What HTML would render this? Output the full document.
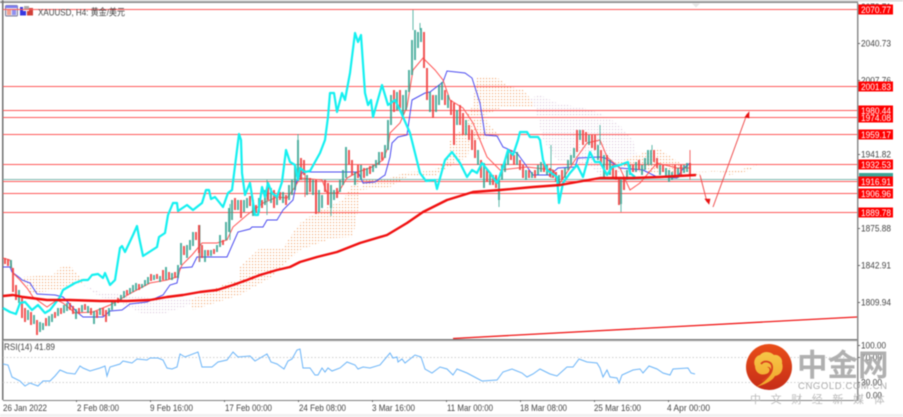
<!DOCTYPE html>
<html><head><meta charset="utf-8"><style>
html,body{margin:0;padding:0;background:#fff;width:903px;height:417px;overflow:hidden}
svg{display:block;position:absolute;left:0;top:0;filter:blur(.45px)}
text{font-family:"Liberation Sans","Noto Sans CJK SC",sans-serif}
</style></head><body>
<svg width="903" height="417" viewBox="0 0 903 417" xmlns="http://www.w3.org/2000/svg">
<defs>
<pattern id="o" width="3" height="3" patternUnits="userSpaceOnUse"><rect width="1.1" height="1.1" fill="#f2a46a"/></pattern>
<pattern id="p" width="3" height="3" patternUnits="userSpaceOnUse"><rect width="1.1" height="1.1" fill="#d9c6dc"/></pattern>
<linearGradient id="lg" x1="0" y1="0" x2="0" y2="1"><stop offset="0" stop-color="#e94e18"/><stop offset="1" stop-color="#c62d18"/></linearGradient>
<linearGradient id="ly" x1="0" y1="0" x2="0" y2="1"><stop offset="0" stop-color="#f6c648"/><stop offset="1" stop-color="#f2a52a"/></linearGradient>
</defs>
<rect width="903" height="417" fill="#fff"/>
<rect x="0" y="0" width="903" height="1.5" fill="#d8d8d8"/>
<rect x="0" y="1.5" width="858" height="1.5" fill="#8a8a8a"/>
<rect x="2" y="0" width="1.5" height="400" fill="#707070"/>
<rect x="0" y="414" width="903" height="3" fill="#f0f0f0"/>

<!-- clouds -->
<g>
<path fill="url(#o)" d="M22 277L53 275L62 266L70 265L80 277L84 282L60 290L30 293Z"/>
<path fill="url(#p)" d="M83 285L100 292L125 295L150 298L190 298L190 305L160 315L140 313L120 302L100 297Z"/>
<path fill="url(#o)" d="M190 300L227 283L240 280L240 267L260 248L283 248L290 237L300 223L315 213L343 200L355 180L358 167L360 200L353 237L333 238L300 250L270 278L240 295L193 310Z"/>
<path fill="url(#o)" d="M360 190L363 180L390 178L407 172L433 171L447 160L450 140L463 127L467 115L472 107L477 77L487 76L500 79L507 86L523 90L530 98L535 107L503 107L483 116L500 137L470 140L468 157L457 162L435 176L407 177L390 187Z"/>
<path fill="url(#p)" d="M530 98L540 95L557 103L583 108L600 113L620 125L633 140L637 155L650 170L600 175L590 166L557 160L543 140L535 107Z"/>
<path fill="url(#o)" d="M610 165L637 155L658 148L680 163L690 172L735 171L757 165L748 171L730 175L713 170L695 176L680 172L640 172Z"/>
</g>

<!-- horizontal lines -->
<g stroke="#ff5a5a" stroke-width="1" fill="none">
<path d="M3 9.5H857M3 86.5H857M3 110.5H857M3 117.5H857M3 134.5H857M3 164.5H857M3 181.5H857M3 193.5H857M3 212.5H857"/>
</g>
<path d="M3 179.5H857" stroke="#7fb8b0" stroke-width="1" fill="none"/>

<!-- blue kijun -->
<polyline fill="none" stroke="#4a4af0" stroke-width="1" points="3,267 10,267 12,272 20,278 22,280 30,283 37,294 55,295 63,297 77,312 83,317 103,317 110,311 122,310 130,304 147,302 163,295 170,285 177,283 180,268 192,267 197,257 227,257 238,232 250,229 252,227 263,227 267,220 277,220 283,210 293,200 297,180 303,172 358,172 363,183 375,182 382,177 385,175 390,157 392,143 398,137 407,135 412,100 425,93 430,92 443,82 447,71 465,73 472,78 480,103 485,135 497,136 503,147 517,153 533,175 550,175 558,168 575,167 578,158 600,157 605,158 620,168 643,170 657,177 677,178 682,170 690,163"/>
<!-- red tenkan -->
<polyline fill="none" stroke="#f55" stroke-width="1" points="3,258 10,260 13,273 20,280 27,288 33,297 47,307 57,300 63,303 75,313 93,312 110,305 133,292 150,283 167,280 177,277 182,265 192,255 202,243 217,243 227,240 233,227 247,215 263,203 277,197 287,198 295,187 300,178 322,180 327,193 338,193 347,178 358,172 372,167 383,160 388,147 390,133 400,123 407,107 413,70 423,58 435,70 443,80 450,100 463,108 473,123 480,140 487,157 500,170 527,167 553,170 560,183 577,157 587,143 600,140 607,157 620,168 630,190 640,183 657,163 677,168 690,168"/>

<!-- candles -->
<path fill="none" stroke="#38a896" stroke-width="1" opacity=".8" d="M298 134V140M413 10V30M420 23V30M499 200V207M621 204V212M652 145V150M230 204V240M267 180V215M200 225V262M331 208V216M551 145V178M600 125V145"/>
<path fill="none" stroke="#f05050" stroke-width="1" opacity=".85" d="M690 150V180M305 170V197M316 180V214M199 225V262M454 103V145"/>
<path fill="none" stroke="#2ba08c" stroke-width="2" opacity=".8" d="M11 260V268M19 290V303M28 310V320M34 315V324M40 322V332M43 323V330M49 316V326M52 314V322M58 308V316M64 305V313M67 303V311M76 309V319M82 305V312M88 306V313M94 311V324M100 308V315M109 308V316M112 302V310M115 300V306M121 295V302M124 291V298M130 288V294M133 285V292M136 283V290M142 284V288M145 280V286M148 277V284M154 275V280M160 276V282M166 267V280M172 273V280M178 265V278M181 243V265M187 245V258M190 240V250M193 232V246M205 250V262M211 250V256M217 245V252M220 235V247M226 222V240M229 208V232M232 200V220M238 200V210M244 200V212M247 198V208M253 200V216M259 198V212M265 190V205M271 188V203M277 195V205M283 192V203M289 185V200M292 180V195M295 165V190M298 140V175M307 175V195M313 180V195M319 190V212M322 195V208M331 185V208M334 190V200M340 180V192M343 170V185M346 147V178M355 172V185M361 165V180M367 168V176M373 165V172M376 160V168M379 152V165M385 145V158M388 120V150M391 95V125M397 92V110M403 95V115M406 90V110M409 70V92M412 40V75M415 30V60M418 32V48M421 28V42M430 92V112M436 95V112M439 85V105M442 82V100M448 95V108M457 110V125M466 120V135M478 150V165M484 163V188M490 172V185M499 180V200M502 165V180M505 160V172M508 152V165M517 152V165M526 170V180M532 172V178M538 165V175M541 162V172M547 165V175M559 175V185M565 168V178M568 160V170M571 155V165M574 148V158M580 130V140M589 135V145M598 145V160M604 155V178M610 160V175M621 180V204M627 170V180M630 165V175M636 162V172M642 165V175M645 158V170M648 150V165M651 150V165M660 165V175M666 168V178M669 170V182M672 172V180M678 168V178M684 165V173M687 163V172"/>
<path fill="none" stroke="#f04444" stroke-width="2" opacity=".9" d="M5 258V264M8 259V266M13 268V292M16 285V300M22 298V318M25 308V322M31 312V325M37 320V335M46 318V326M55 312V318M61 308V314M70 303V310M73 306V314M79 308V314M85 304V310M91 308V315M97 311V318M103 308V316M106 310V322M118 298V303M127 290V295M139 284V290M151 274V281M157 274V279M163 270V280M169 272V279M175 272V278M184 246V255M196 232V240M199 225V253M202 245V258M208 250V256M214 249V254M223 240V245M235 198V210M241 200V218M250 196V206M256 205V213M262 200V208M268 185V200M274 190V208M280 192V200M286 195V205M301 158V180M304 160V175M310 178V192M316 180V214M325 180V192M328 183V205M337 188V198M349 150V165M352 160V175M358 165V178M364 168V178M370 166V174M382 152V160M394 90V112M400 90V108M424 32V68M427 68V100M433 95V118M445 90V105M451 100V115M454 103V145M460 105V125M463 113V135M469 125V140M472 130V150M475 140V158M481 160V178M487 170V182M493 175V185M496 175V188M511 150V160M514 155V165M520 160V170M523 165V178M529 170V178M535 170V178M544 162V172M550 168V177M553 170V178M556 172V182M562 170V180M577 130V152M583 130V145M586 132V142M592 135V148M595 135V150M601 150V165M607 155V170M613 165V178M616 170V180M619 178V205M624 178V190M633 165V172M639 160V170M654 150V162M657 158V168M663 165V172M675 165V178M681 165V175M690 163V175"/>

<!-- cyan -->
<polyline fill="none" stroke="#14f0f0" stroke-width="2.2" stroke-linejoin="round" points="3,308 10,312 16,314 20,303 25,302 32,310 38,305 45,313 50,310 60,297 63,290 75,283 83,280 88,280 92,275 98,274 103,278 105,273 110,285 115,280 120,248 122,246 125,252 133,235 137,226 139,237 143,256 157,247 159,237 165,233 168,215 173,203 177,203 178,211 187,205 193,210 202,203 206,190 209,190 211,199 215,197 223,207 228,193 232,190 237,150 239,134 241,140 242,173 245,195 250,183 255,215 258,215 262,187 265,197 268,183 272,193 277,197 282,182 286,150 290,162 295,165 298,180 300,168 305,172 310,171 320,153 325,140 328,117 330,93 334,93 337,112 342,93 345,100 350,73 355,33 358,42 361,35 365,93 368,105 371,100 373,117 382,85 388,105 395,100 400,110 410,133 415,153 420,173 426,181 435,180 437,189 445,160 452,152 460,163 467,177 472,170 477,173 482,163 490,173 497,183 503,167 508,150 513,155 518,140 520,132 527,132 530,137 538,137 540,140 543,160 547,170 557,177 559,203 563,183 570,173 577,165 583,177 590,152 595,162 600,162 607,175 612,167 620,165 628,162 630,173 635,177"/>

<!-- MA thick -->
<polyline fill="none" stroke="#f01010" stroke-width="2.4" stroke-linejoin="round" points="3,296 13,295 23,297 47,300 70,300 100,301 127,301 150,300 167,297 183,295 200,292 217,290 233,285 247,280 260,275 277,270 290,267 300,262 317,257 337,252 360,243 387,235 407,223 423,212 447,200 473,192 500,190 533,187 560,185 600,178 633,178 660,177 696,175"/>
<!-- trend -->
<path d="M453 338.5L857 317" stroke="#f01818" stroke-width="1.3" fill="none"/>
<!-- arrows -->
<path d="M713 207L747 114" stroke="#f05050" stroke-width="1" fill="none"/>
<path d="M745 117L749 112L749 118Z" fill="#e81010" stroke="#e81010" stroke-width=".6"/>
<path d="M700 175L707 202" stroke="#f05050" stroke-width="1" fill="none"/>
<path d="M705 199L710 199L709 204Z" fill="#e81010" stroke="#e81010" stroke-width=".6"/>
<path d="M692 3.5H700L696 7.5Z" fill="#e6e6e6"/>

<!-- panes -->
<rect x="3" y="339" width="854" height="1.6" fill="#808080"/>
<rect x="3" y="340.6" width="854" height="1" fill="#d4d4d4"/>
<path d="M3 357.5H857M3 382.5H857" stroke="#cfcfcf" stroke-width="1" stroke-dasharray="1.5 2" fill="none"/>
<rect x="3" y="400" width="855" height="1" fill="#808080"/>
<rect x="857" y="3" width="1.5" height="398" fill="#8c8c8c"/>
<path d="M76.5 400V402M150.5 400V402M224.5 400V402M298.5 400V402M372.5 400V402M446.5 400V402M520.5 400V402M594.5 400V402M668.5 400V402M858 43.5H860M858 80.5H860M858 154.5H860M858 228.5H860M858 265.5H860M858 302.5H860M858 345.5H860M858 357.5H860M858 382.5H860M858 395.5H860" stroke="#666" stroke-width="1" fill="none"/>

<!-- RSI -->
<polyline fill="none" stroke="#6ab4f8" stroke-width="1" points="3,364 8,365 12,377 20,381 25,386 30,383 38,386 43,381 50,381 55,376 60,370 67,373 75,374 80,366 83,368 90,371 100,368 105,366 107,376 110,367 120,364 123,361 132,363 137,359 147,360 150,358 158,358 163,360 167,368 172,369 177,367 180,354 185,357 198,352 202,367 212,367 218,362 227,360 233,352 238,357 250,356 255,361 267,354 271,362 277,364 284,369 288,361 292,359 297,350 300,349 303,368 310,368 315,375 318,375 322,368 325,372 328,368 332,371 340,368 347,362 355,365 358,369 363,367 370,368 380,365 390,353 393,358 397,357 398,362 402,359 405,363 415,355 421,357 425,369 432,373 440,367 447,369 453,375 457,369 467,373 482,381 497,380 503,372 512,369 522,373 527,377 533,374 540,369 550,374 557,376 567,367 573,367 579,359 587,362 597,363 600,368 603,377 607,370 610,377 617,378 619,383 622,375 633,370 640,369 643,373 649,366 657,369 663,373 670,375 673,369 688,368 691,373 695,374"/>

<!-- price labels -->
<g font-size="9.5" fill="#444">
<text x="861" y="10" textLength="30" lengthAdjust="spacingAndGlyphs">2073.71</text>
<text x="861" y="46.5" textLength="30" lengthAdjust="spacingAndGlyphs">2040.73</text>
<text x="861" y="83.5" textLength="30" lengthAdjust="spacingAndGlyphs">2007.76</text>
<text x="861" y="157.5" textLength="30" lengthAdjust="spacingAndGlyphs">1941.82</text>
<text x="861" y="231.5" textLength="30" lengthAdjust="spacingAndGlyphs">1875.88</text>
<text x="861" y="268.5" textLength="30" lengthAdjust="spacingAndGlyphs">1842.91</text>
<text x="861" y="305.5" textLength="30" lengthAdjust="spacingAndGlyphs">1809.94</text>
<text x="861" y="348.5" textLength="25" lengthAdjust="spacingAndGlyphs">100.00</text>
<text x="861" y="360.5" textLength="21" lengthAdjust="spacingAndGlyphs">70.00</text>
<text x="861" y="385.5" textLength="21" lengthAdjust="spacingAndGlyphs">30.00</text>
<text x="866" y="398.5" textLength="16" lengthAdjust="spacingAndGlyphs">0.00</text>
</g>
<rect x="859" y="173" width="34" height="4" fill="#3aa596"/>
<g fill="#ff0000">
<rect x="858.5" y="4.5" width="34.5" height="10"/>
<rect x="858.5" y="81.5" width="34.5" height="10"/>
<rect x="858.5" y="105.5" width="34.5" height="10"/>
<rect x="858.5" y="112.5" width="34.5" height="10"/>
<rect x="858.5" y="129.5" width="34.5" height="10"/>
<rect x="858.5" y="159.5" width="34.5" height="10"/>
<rect x="858.5" y="176.5" width="34.5" height="10"/>
<rect x="858.5" y="188.5" width="34.5" height="10"/>
<rect x="858.5" y="207.5" width="34.5" height="10"/>
</g>
<g font-size="9.5" fill="#fff">
<text x="861" y="13" textLength="30" lengthAdjust="spacingAndGlyphs">2070.77</text>
<text x="861" y="90" textLength="30" lengthAdjust="spacingAndGlyphs">2001.83</text>
<text x="861" y="114" textLength="30" lengthAdjust="spacingAndGlyphs">1980.44</text>
<text x="861" y="121" textLength="30" lengthAdjust="spacingAndGlyphs">1974.08</text>
<text x="861" y="138" textLength="30" lengthAdjust="spacingAndGlyphs">1959.17</text>
<text x="861" y="168" textLength="30" lengthAdjust="spacingAndGlyphs">1932.53</text>
<text x="861" y="185" textLength="30" lengthAdjust="spacingAndGlyphs">1916.91</text>
<text x="861" y="197" textLength="30" lengthAdjust="spacingAndGlyphs">1906.96</text>
<text x="861" y="216" textLength="30" lengthAdjust="spacingAndGlyphs">1889.78</text>
</g>

<!-- top-left -->
<rect x="5.5" y="5.5" width="12" height="10.5" rx="1" fill="#e8e8f0" stroke="#7a7a9a"/>
<rect x="5.5" y="5.5" width="12" height="2.5" fill="#7c7cf0"/>
<rect x="7" y="9" width="4" height="6" fill="#f0a090"/>
<rect x="12" y="9" width="4" height="6" fill="#9090f0"/>
<path d="M20 7H23V11H26V15.5H20Z" fill="#3838e0"/>
<path d="M27 11H29V8H33V15.5H27Z" fill="#d04038"/>
<rect x="24" y="6" width="5" height="3" fill="#aaa"/>
<path d="M3 9.5H130" stroke="#ff5a5a" stroke-width="1" fill="none"/>
<text x="38" y="15.5" font-size="9.5" fill="#444" textLength="87" lengthAdjust="spacingAndGlyphs">XAUUSD, H4:  黄金/美元</text>
<text x="4" y="350" font-size="9.5" fill="#444" textLength="51" lengthAdjust="spacingAndGlyphs">RSI(14) 41.89</text>

<!-- time labels -->
<g font-size="9.5" fill="#444">
<text x="3" y="411" textLength="44" lengthAdjust="spacingAndGlyphs">26 Jan 2022</text>
<text x="77" y="411" textLength="42" lengthAdjust="spacingAndGlyphs">2 Feb 08:00</text>
<text x="150" y="411" textLength="43" lengthAdjust="spacingAndGlyphs">9 Feb 16:00</text>
<text x="225" y="411" textLength="47" lengthAdjust="spacingAndGlyphs">17 Feb 00:00</text>
<text x="299" y="411" textLength="47" lengthAdjust="spacingAndGlyphs">24 Feb 08:00</text>
<text x="372" y="411" textLength="43" lengthAdjust="spacingAndGlyphs">3 Mar 16:00</text>
<text x="447" y="411" textLength="46" lengthAdjust="spacingAndGlyphs">11 Mar 00:00</text>
<text x="520" y="411" textLength="47" lengthAdjust="spacingAndGlyphs">18 Mar 08:00</text>
<text x="594" y="411" textLength="47" lengthAdjust="spacingAndGlyphs">25 Mar 16:00</text>
<text x="667" y="411" textLength="43" lengthAdjust="spacingAndGlyphs">4 Apr 00:00</text>
</g>

<!-- logo -->
<circle cx="769" cy="367" r="23" fill="url(#lg)"/>
<path d="M756 387C766 384 772 381 775 376C781 375 784 369 782 363C783 358 778 354 774 355C770 351 763 351 760 355C755 356 753 362 755 366C755 372 760 376 766 374C770 373 771 368 767 367C771 366 772 371 770 375C766 381 761 384 756 387Z" fill="url(#ly)"/>
<path d="M761 364C764 360 771 361 772 366C773 372 768 378 762 381" fill="none" stroke="#d8401c" stroke-width="1.8"/>
<text x="797" y="376" font-size="30.5" font-weight="700" fill="#a9a9a9" fill-opacity=".92" style="font-family:'Noto Sans CJK SC',sans-serif">中金网</text>
<text x="798" y="389" font-size="9.5" fill="#aaa" textLength="89" lengthAdjust="spacing">CNGOLD.COM.CN</text>
<text x="750" y="403" font-size="11" fill="#bbb" letter-spacing="9.6" style="font-family:'Noto Sans CJK SC',sans-serif">中文财经新媒体</text>
</svg>
</body></html>
